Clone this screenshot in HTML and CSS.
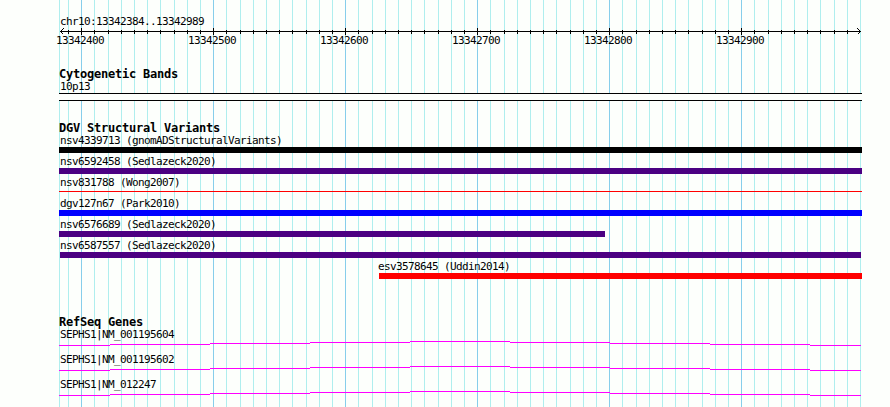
FILE: index.html
```html
<!DOCTYPE html>
<html lang="en">

<head>
    <meta charset="UTF-8">
    <title>chr10:13342384..13342989</title>
    <link rel="stylesheet" href="styles.css">
</head>

<body>
    <div class="browser">
        <div class="ruler">
            <div class="region">chr10:13342384..13342989</div>
            <svg class="axis" width="803" height="8" viewBox="0 0 803 8">
                <defs>
                    <pattern id="ticks" x="22" y="0" width="132" height="8" patternUnits="userSpaceOnUse">
                        <path d="M0 0h1v7h-1zM13 2h1v4h-1zM27 2h1v4h-1zM40 2h1v4h-1zM53 2h1v4h-1zM66 2h1v4h-1zM79 2h1v4h-1zM93 2h1v4h-1zM106 2h1v4h-1zM119 2h1v4h-1z" />
                    </pattern>
                </defs>
                <rect x="8" y="0" width="786" height="8" fill="url(#ticks)" />
                <rect x="1" y="3" width="801" height="1" />
                <path class="arrow" d="M4.5 0.5L1.5 3.5L4.5 6.5M798.5 0.5L801.5 3.5L798.5 6.5" />
            </svg>
            <div class="scale">
                <span>13342400</span>
                <span>13342500</span>
                <span>13342600</span>
                <span>13342700</span>
                <span>13342800</span>
                <span>13342900</span>
            </div>
        </div>

        <div class="track cyto">
            <h2>Cytogenetic Bands</h2>
            <div class="label">10p13</div>
            <div class="band"></div>
        </div>

        <div class="track variants">
            <h2>DGV Structural Variants</h2>
            <div class="variant">
                <div class="label">nsv4339713 (gnomADStructuralVariants)</div>
                <div class="bar black"></div>
            </div>
            <div class="variant">
                <div class="label">nsv6592458 (Sedlazeck2020)</div>
                <div class="bar indigo"></div>
            </div>
            <div class="variant">
                <div class="label">nsv831788 (Wong2007)</div>
                <div class="bar thin"></div>
            </div>
            <div class="variant">
                <div class="label">dgv127n67 (Park2010)</div>
                <div class="bar blue"></div>
            </div>
            <div class="variant">
                <div class="label">nsv6576689 (Sedlazeck2020)</div>
                <div class="bar indigo short"></div>
            </div>
            <div class="variant">
                <div class="label">nsv6587557 (Sedlazeck2020)</div>
                <div class="bar indigo inset"></div>
            </div>
            <div class="variant late">
                <div class="label">esv3578645 (Uddin2014)</div>
                <div class="bar red"></div>
            </div>
        </div>

        <div class="track genes">
            <h2>RefSeq Genes</h2>
            <svg class="defs" width="0" height="0">
                <path id="intron" d="M0 4h51v1h-51zM51 3h100v1h-100zM151 2h100v1h-100zM251 1h100v1h-100zM351 0h100v1h-100zM451 1h100v1h-100zM551 2h100v1h-100zM651 3h100v1h-100zM751 4h51v1h-51z" />
            </svg>
            <div class="gene">
                <div class="label">SEPHS1|NM_001195604</div>
                <svg class="intron" width="803" height="5"><use href="#intron" /></svg>
            </div>
            <div class="gene">
                <div class="label">SEPHS1|NM_001195602</div>
                <svg class="intron" width="803" height="5"><use href="#intron" /></svg>
            </div>
            <div class="gene">
                <div class="label">SEPHS1|NM_012247</div>
                <svg class="intron" width="803" height="5"><use href="#intron" /></svg>
            </div>
        </div>
    </div>
</body>

</html>
```
FILE: styles.css
```css
body {
    margin: 0;
    background-color: #fdfffc;
    color: black;
    font-family: "DejaVu Sans Mono", monospace;
    font-size: 11px;
    line-height: 13px;
    letter-spacing: -0.622px;
    overflow: hidden;
}

/* vertical grid: one major line each 132px, nine minor lines between */
.browser {
    width: 803px;
    height: 407px;
    margin-left: 59px;
    background-image:
        linear-gradient(#afeeee, #afeeee),
        linear-gradient(to right,
            #87ceeb 1px, transparent 1px 13px,
            #afeeee 13px 14px, transparent 14px 27px,
            #afeeee 27px 28px, transparent 28px 40px,
            #afeeee 40px 41px, transparent 41px 53px,
            #afeeee 53px 54px, transparent 54px 66px,
            #afeeee 66px 67px, transparent 67px 79px,
            #afeeee 79px 80px, transparent 80px 93px,
            #afeeee 93px 94px, transparent 94px 106px,
            #afeeee 106px 107px, transparent 107px 119px,
            #afeeee 119px 120px, transparent 120px);
    background-size: 1px 100%, 132px 100%;
    background-position: 0 0, 22px 0;
    background-repeat: no-repeat, repeat-x;
}

svg {
    display: block;
    shape-rendering: crispEdges;
}

.ruler {
    height: 68px;
    padding-top: 15px;
    box-sizing: border-box;
}

.region,
.label {
    padding-left: 1px;
    white-space: nowrap;
}

.label {
    height: 12px;
    line-height: 12px;
}

.axis {
    height: 8px;
}

.arrow {
    fill: none;
    stroke: black;
}

.scale {
    display: flex;
    margin: -2px 0 0 -3px;
}

.scale span {
    width: 132px;
    flex-shrink: 0;
}

h2 {
    margin: 0;
    font-size: 12px;
    line-height: 13px;
    font-weight: bold;
    letter-spacing: -0.224px;
}

.cyto {
    height: 54px;
}

.band {
    height: 6px;
    border-top: 1px solid black;
    border-bottom: 1px solid black;
    background-color: #fdfffc;
}

.variants {
    height: 194px;
}

.variant {
    height: 21px;
}

.bar {
    height: 6px;
}

.black {
    background-color: black;
}

.indigo {
    background-color: #4b0082;
}

.blue {
    background-color: blue;
}

.red {
    background-color: red;
}

.thin {
    height: 1px;
    margin-top: 2px;
    background-color: red;
}

.short {
    width: 546px;
}

.inset {
    margin: 0 1px;
}

.late {
    margin-left: 320px;
}

.late .label {
    padding-left: 0;
    margin-left: -1px;
}

.gene {
    height: 25px;
}

.intron {
    fill: magenta;
}
```
